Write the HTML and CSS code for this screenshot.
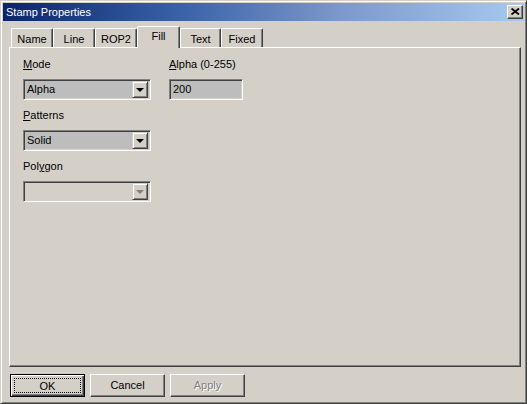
FILE: index.html
```html
<!DOCTYPE html>
<html>
<head>
<meta charset="utf-8">
<link rel="stylesheet" href="styles.css">
</head>
<body>
<div class="window">
  <div class="titlebar">
    <span class="title">Stamp Properties</span>
    <span class="close"><svg width="9" height="7" viewBox="0 0 9 7"><path d="M0.5 0.5 L8 6.5 M8 0.5 L0.5 6.5" stroke="#000" stroke-width="1.8" fill="none"/></svg></span>
  </div>
  <div class="tabs">
    <div class="tab w42">Name</div>
    <div class="tab w42">Line</div>
    <div class="tab w42">ROP2</div>
    <div class="tab active">Fill</div>
    <div class="tab w41">Text</div>
    <div class="tab w42">Fixed</div>
  </div>
  <div class="panel">
    <div class="col left">
      <div class="lbl"><u>M</u>ode</div>
      <div class="combo"><span class="val">Alpha</span><span class="drop"><i class="tri"></i></span></div>
      <div class="lbl"><u>P</u>atterns</div>
      <div class="combo"><span class="val">Solid</span><span class="drop"><i class="tri"></i></span></div>
      <div class="lbl">Pol<u>y</u>gon</div>
      <div class="combo disabled"><span class="val"></span><span class="drop"><i class="tri"></i></span></div>
    </div>
    <div class="col right">
      <div class="lbl"><u>A</u>lpha (0-255)</div>
      <div class="edit">200</div>
    </div>
  </div>
  <div class="buttons">
    <div class="btn default"><span class="focus">OK</span></div>
    <div class="btn">Cancel</div>
    <div class="btn disabled">Apply</div>
  </div>
</div>
</body>
</html>
```
FILE: styles.css
```css
html, body {
  margin: 0;
  padding: 0;
  background: #D4D0C8;
}
body {
  font-family: "Liberation Sans", Arial, sans-serif;
  font-size: 11px;
  color: #000;
}
.window {
  width: 527px;
  height: 404px;
  box-sizing: border-box;
  border: 1px solid;
  border-color: #D4D0C8 #404040 #404040 #D4D0C8;
  box-shadow: inset 1px 1px 0 #fff, inset -1px -1px 0 #808080;
  padding: 2px;
  display: flex;
  flex-direction: column;
  background: #D4D0C8;
}
.titlebar {
  height: 18px;
  display: flex;
  align-items: center;
  justify-content: space-between;
  background: linear-gradient(to right, #0A246A 0%, #3B64A8 35%, #7E98CB 65%, #A6CAF0 100%);
  color: #fff;
  padding-left: 3px;
  padding-right: 1px;
  flex: none;
}
.title {
  font-size: 11px;
  line-height: 13px;
}
.close {
  width: 16px;
  height: 14px;
  box-sizing: border-box;
  background: #D4D0C8;
  border: 1px solid;
  border-color: #fff #404040 #404040 #fff;
  box-shadow: inset -1px -1px 0 #808080;
  display: flex;
  align-items: center;
  justify-content: center;
  padding-bottom: 1px;
}
.close svg { display: block; }
.tabs {
  margin-top: 5px;
  height: 21px;
  padding-left: 8px;
  display: flex;
  align-items: flex-end;
  position: relative;
  z-index: 1;
  flex: none;
}
.tab {
  height: 19px;
  box-sizing: border-box;
  border-top: 1px solid #fff;
  border-left: 1px solid #fff;
  border-right: 1px solid #404040;
  box-shadow: inset -1px 0 0 #808080;
  border-top-left-radius: 2px;
  border-top-right-radius: 2px;
  display: flex;
  align-items: center;
  justify-content: center;
  padding-top: 1px;
  background: #D4D0C8;
}
.w42 { width: 42px; }
.w41 { width: 41px; }
.tab.active {
  width: 43px;
  height: 22px;
  margin-bottom: -1px;
  padding-top: 0;
  padding-bottom: 4px;
}
.panel {
  margin-left: 6px;
  margin-right: 3px;
  height: 320px;
  box-sizing: border-box;
  border: 1px solid;
  border-color: #fff #404040 #404040 #fff;
  box-shadow: inset -1px -1px 0 #808080;
  padding: 10px 0 0 13px;
  display: flex;
  align-items: flex-start;
  flex: none;
}
.col {
  display: flex;
  flex-direction: column;
}
.col.left { width: 128px; }
.col.right { margin-left: 18px; }
.lbl {
  line-height: 13px;
  height: 13px;
  margin-bottom: 8px;
}
.combo {
  width: 128px;
  height: 21px;
  box-sizing: border-box;
  border: 1px solid;
  border-color: #808080 #fff #fff #808080;
  box-shadow: inset 1px 1px 0 #404040, inset -1px -1px 0 #D4D0C8;
  background: #BDBDBD;
  display: flex;
  align-items: center;
  padding: 2px 2px 2px 3px;
  margin-bottom: 9px;
}
.combo .val {
  flex: 1;
  line-height: 15px;
}
.drop {
  width: 16px;
  height: 17px;
  box-sizing: border-box;
  background: #D4D0C8;
  border: 1px solid;
  border-color: #D4D0C8 #404040 #404040 #D4D0C8;
  box-shadow: inset 1px 1px 0 #fff, inset -1px -1px 0 #808080;
  display: flex;
  align-items: center;
  justify-content: center;
}
.tri {
  width: 0;
  height: 0;
  border-left: 4px solid transparent;
  border-right: 4px solid transparent;
  border-top: 4px solid #000;
  margin-left: -1px;
  margin-top: 1px;
}
.combo.disabled {
  background: #D4D0C8;
}
.combo.disabled .tri {
  border-top-color: #808080;
}
.edit {
  width: 74px;
  height: 21px;
  box-sizing: border-box;
  border: 1px solid;
  border-color: #808080 #fff #fff #808080;
  box-shadow: inset 1px 1px 0 #404040, inset -1px -1px 0 #D4D0C8;
  background: #BDBDBD;
  padding: 0 0 0 3px;
  line-height: 19px;
}
.buttons {
  margin-top: 7px;
  padding-left: 7px;
  display: flex;
  gap: 5px;
  flex: none;
}
.btn {
  width: 75px;
  height: 23px;
  box-sizing: border-box;
  border: 1px solid;
  border-color: #fff #404040 #404040 #fff;
  box-shadow: inset -1px -1px 0 #808080;
  display: flex;
  align-items: center;
  justify-content: center;
  padding-bottom: 1px;
}
.btn.default {
  border: 1px solid #000;
  box-shadow: inset 1px 1px 0 #fff, inset -1px -1px 0 #404040, inset -2px -2px 0 #808080;
  padding: 3px;
}
.btn .focus {
  flex: 1;
  align-self: stretch;
  border: 1px dotted #000;
  display: flex;
  align-items: center;
  justify-content: center;
}
.btn.disabled {
  color: #808080;
  text-shadow: 1px 1px 0 #fff;
}
```
